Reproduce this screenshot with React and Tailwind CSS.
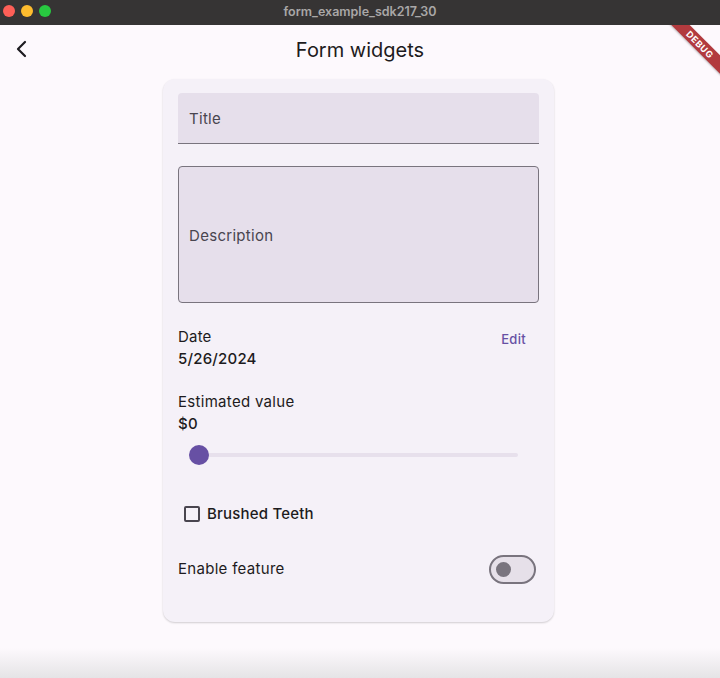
import { useState } from "react";

function TitleBar() {
  return (
    <div className="relative flex h-[25px] items-center justify-center bg-[#363434]">
      <div className="absolute left-[3px] top-[5px] flex gap-[6px]">
        <span className="h-[12px] w-[12px] rounded-full bg-[#fe5f57]" />
        <span className="h-[12px] w-[12px] rounded-full bg-[#febc2e]" />
        <span className="h-[12px] w-[12px] rounded-full bg-[#28c840]" />
      </div>
      <span className="text-[12.5px] font-semibold text-[#a9a7a7]">form_example_sdk217_30</span>
    </div>
  );
}

function DebugBanner() {
  return (
    <div className="pointer-events-none absolute right-0 top-[25px] h-[60px] w-[60px] overflow-hidden">
      <div className="absolute left-[-10px] top-[13px] flex h-[13px] w-[100px] rotate-45 items-center justify-center bg-[#b23a3e] text-[9px] font-bold leading-none tracking-[0.6px] text-white shadow-[0_1px_2px_rgba(0,0,0,0.25)]">
        DEBUG
      </div>
    </div>
  );
}

export default function App() {
  const [title, setTitle] = useState("");
  const [description, setDescription] = useState("");
  const [value, setValue] = useState(0);
  const [brushed, setBrushed] = useState(false);
  const [enabled, setEnabled] = useState(false);

  return (
    <div className="relative flex h-[678px] w-[720px] flex-col overflow-hidden bg-[#fdf9fd] font-['Inter',sans-serif] text-[#1d1b20]">
      <TitleBar />
      <DebugBanner />

      <header className="relative flex h-[50px] items-center justify-center">
        <button type="button" className="absolute left-[13px] top-[13px] text-[#1d1b20]">
          <svg width="18" height="22" viewBox="0 0 18 22" fill="none" stroke="currentColor" strokeWidth="2.2" strokeLinecap="round" strokeLinejoin="round">
            <path d="M12 4 L5 11 L12 18" />
          </svg>
        </button>
        <h1 className="text-[20px] font-normal">Form widgets</h1>
      </header>

      <div className="flex justify-center pr-[3px] pt-[4px]">
        <div className="flex w-[391px] flex-col rounded-[12px] bg-[#f5f1f8] px-[15px] pb-[38px] pt-[14px] shadow-[0_1px_2px_rgba(0,0,0,0.18)]">
          <label className="flex h-[51px] items-center rounded-t-[4px] border-b border-[#79747e] bg-[#e6dfeb] px-[11px] pt-[2px]">
            <input
              value={title}
              onChange={(e) => setTitle(e.target.value)}
              placeholder="Title"
              className="w-full bg-transparent text-[15px] tracking-[0.3px] text-[#1d1b20] placeholder:text-[#49454f] focus:outline-none"
            />
          </label>

          <label className="mt-[22px] flex h-[137px] items-center rounded-[4px] border border-[#79747e] bg-[#e6dfeb] px-[10px] pt-[3px]">
            <input
              value={description}
              onChange={(e) => setDescription(e.target.value)}
              placeholder="Description"
              className="w-full bg-transparent text-[15px] tracking-[0.3px] text-[#1d1b20] placeholder:text-[#49454f] focus:outline-none"
            />
          </label>

          <div className="mt-[23px] flex items-start justify-between">
            <div className="flex flex-col">
              <span className="text-[15px] leading-[22px] tracking-[0.2px]">Date</span>
              <span className="text-[15px] font-medium leading-[22px] tracking-[0.2px]">5/26/2024</span>
            </div>
            <button type="button" className="mr-[13px] mt-[4px] text-[13px] font-medium tracking-[0.3px] text-[#6750a4]">
              Edit
            </button>
          </div>

          <div className="mt-[21px] flex flex-col">
            <span className="text-[15px] leading-[22px] tracking-[0.3px]">Estimated value</span>
            <span className="text-[15px] font-medium leading-[22px] tracking-[0.2px]">${value}</span>
          </div>

          <div className="relative mt-[10px] h-[20px] px-[12px]">
            <div className="absolute left-[21px] right-[21px] top-[8px] h-[4px] rounded-full bg-[#e7e0ec]" />
            <input
              type="range"
              min="0"
              max="100"
              value={value}
              onChange={(e) => setValue(Number(e.target.value))}
              className="absolute inset-0 w-full opacity-0"
            />
            <div
              className="pointer-events-none absolute top-0 h-[20px] w-[20px] rounded-full bg-[#6750a4]"
              style={{ left: `${11 + value * 3.2}px` }}
            />
          </div>

          <label className="mt-[38px] flex cursor-pointer items-center gap-[7px] pl-[6px]">
            <span
              onClick={() => setBrushed(!brushed)}
              className={`flex h-[16px] w-[16px] items-center justify-center rounded-[2px] border-2 ${
                brushed ? "border-[#6750a4] bg-[#6750a4]" : "border-[#49454f]"
              }`}
            >
              {brushed && (
                <svg width="12" height="12" viewBox="0 0 12 12" fill="none" stroke="white" strokeWidth="2">
                  <path d="M2 6 L5 9 L10 3" />
                </svg>
              )}
            </span>
            <span className="text-[15px] font-medium tracking-[0.2px]">Brushed Teeth</span>
          </label>

          <div className="mt-[29px] flex items-center justify-between">
            <span className="text-[15px] tracking-[0.3px]">Enable feature</span>
            <button
              type="button"
              onClick={() => setEnabled(!enabled)}
              className={`mr-[3px] flex h-[29px] w-[47px] items-center rounded-full border-2 px-[5px] ${
                enabled ? "justify-end border-[#6750a4] bg-[#6750a4]" : "border-[#79747e] bg-[#e6e0e9]"
              }`}
            >
              <span className={`h-[15px] w-[15px] rounded-full ${enabled ? "bg-white" : "bg-[#79747e]"}`} />
            </button>
          </div>
        </div>
      </div>

      <div className="absolute bottom-0 left-0 h-[30px] w-full bg-gradient-to-b from-[#fdf9fd] to-[#e5e4e6]" />
    </div>
  );
}
